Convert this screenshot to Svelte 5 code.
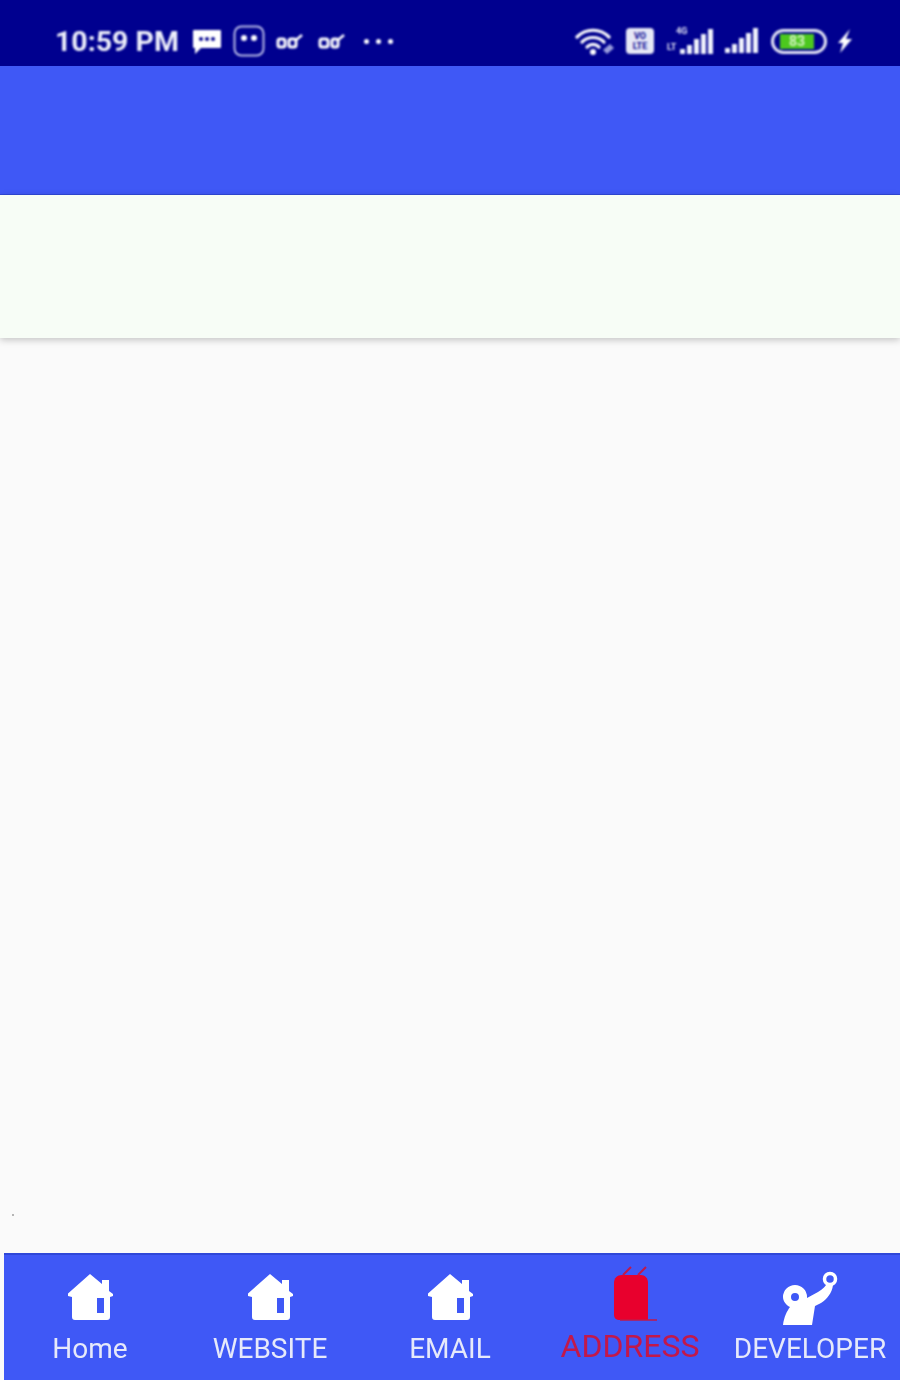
<script>
  const tabs = [
    { label: 'Home', icon: 'home' },
    { label: 'WEBSITE', icon: 'home' },
    { label: 'EMAIL', icon: 'home' },
    { label: 'ADDRESS', icon: 'addr', active: true },
    { label: 'DEVELOPER', icon: 'dev' }
  ];
</script>

<div class="screen">
  <div class="status">
    <div class="left">
      <span class="time">10:59 PM</span>
      <svg class="msg" viewBox="0 0 30 28" width="30" height="28">
        <path fill="#fff" d="M2 3h26a1 1 0 0 1 1 1v16a1 1 0 0 1-1 1H9l-6 6v-6H2a1 1 0 0 1-1-1V4a1 1 0 0 1 1-1z"/>
        <circle cx="9" cy="12" r="2" fill="#00008f"/><circle cx="15" cy="12" r="2" fill="#00008f"/><circle cx="21" cy="12" r="2" fill="#00008f"/>
      </svg>
      <svg class="bot" viewBox="0 0 32 32" width="32" height="32">
        <rect x="1.5" y="1.5" width="29" height="29" rx="7" fill="none" stroke="#b9bce8" stroke-width="2"/>
        <circle cx="11" cy="13" r="3" fill="#fff"/><circle cx="21" cy="13" r="3" fill="#fff"/>
      </svg>
      <svg class="vo first" viewBox="0 0 28 18" width="28" height="18">
        <g fill="none" stroke="#fff" stroke-width="3"><rect x="2" y="7" width="7" height="8" rx="2"/><rect x="13" y="7" width="7" height="8" rx="2"/></g>
        <path d="M20 8l6-5" stroke="#fff" stroke-width="2.500" fill="none"/>
      </svg>
      <svg class="vo second" viewBox="0 0 28 18" width="28" height="18">
        <g fill="none" stroke="#fff" stroke-width="3"><rect x="2" y="7" width="8" height="8" rx="2"/><rect x="14" y="7" width="6" height="8" rx="2"/></g>
        <path d="M20 8l6-5" stroke="#fff" stroke-width="2.500" fill="none"/>
      </svg>
      <span class="dots"><i></i><i></i><i></i></span>
    </div>
    <div class="right">
      <svg class="wifi" viewBox="0 0 40 28" width="40" height="28">
        <g fill="none" stroke="#fff" stroke-width="3.200" stroke-linecap="round">
          <path d="M2 10C11 1 25 1 34 10"/><path d="M7 15c6-6 16-6 22 0"/><path d="M12 20c3.500-3.500 8.500-3.500 12 0"/>
        </g>
        <circle cx="18" cy="25" r="3" fill="#fff"/>
        <path d="M28 23l7-6 4 4-7 6z" fill="#9a9edc"/>
      </svg>
      <span class="volte"><span>VO</span><span>LTE</span></span>
      <svg class="sig4g" viewBox="0 0 50 28" width="50" height="28">
        <text x="9" y="7" class="tiny">4G</text>
        <text x="0" y="23" class="tiny">LT</text>
        <g fill="#eef0fb"><rect x="13" y="22" width="5" height="5"/><rect x="20" y="18" width="5" height="9"/><rect x="27" y="12" width="5" height="15"/><rect x="34" y="7" width="5" height="20"/><rect x="41" y="2" width="5" height="25"/></g>
      </svg>
      <svg class="sig" viewBox="0 0 36 26" width="36" height="26">
        <g fill="#eef0fb"><rect x="1" y="20" width="5" height="5"/><rect x="8" y="16" width="5" height="9"/><rect x="15" y="10" width="5" height="15"/><rect x="22" y="5" width="5" height="20"/><rect x="29" y="0" width="5" height="25"/></g>
      </svg>
      <div class="battery"><div class="fill">83</div></div>
      <svg class="bolt" viewBox="0 0 16 24" width="16" height="24">
        <path fill="#fff" d="M13 0L1 14h5l-3 10 12-14H9z"/>
      </svg>
    </div>
  </div>

  <div class="appbar"></div>
  <div class="band"></div>
  <div class="content"><span class="speck"></span></div>

  <nav class="nav">
    {#each tabs as tab}
      <div class="tab" class:active={tab.active}>
        <svg class="icon" viewBox="0 0 60 60" width="60" height="60">
          {#if tab.icon === 'home'}
            <path fill="#fff" fill-rule="evenodd" d="M30 4L42 14V10h7v11l4 3v2l-3 1v20a3 3 0 0 1-3 3H15a3 3 0 0 1-3-3V27l-4-1v-2.500zM37 28v15h7V28z"/>
          {:else if tab.icon === 'addr'}
            <path fill="#e8002d" d="M22 5h19c4 0 7 3 7 8v37H20c-4 0-6-2-6-5V13c0-5 3-8 8-8z"/>
            <path d="M23 5l8-8M38 5l8-8" stroke="#c2184a" stroke-width="2" fill="none"/>
            <path d="M20 50h37" stroke="#c2184a" stroke-width="1.500"/>
          {:else}
            <path fill="#fff" fill-rule="evenodd" d="M3 27a12 12 0 0 1 24 0v1l11-6c5-3 8-6 9-9l6 2c-1 8-6 14-12 18l-6 3-3 19H3c1-8 4-14 7-18-4-2-7-6-7-10zm8 0a4 4 0 1 0 8 0 4 4 0 0 0-8 0z"/>
            <circle cx="50" cy="9" r="5.500" fill="none" stroke="#fff" stroke-width="3.500"/>
          {/if}
        </svg>
        <span class="label">{tab.label}</span>
      </div>
    {/each}
  </nav>
</div>

<style>
  :global(body) {
    margin: 0;
    background: #fafafa;
  }
  .screen {
    width: 900px;
    height: 1380px;
    display: flex;
    flex-direction: column;
    background: #fafafa;
    font-family: Roboto, "Liberation Sans", sans-serif;
    overflow: hidden;
  }
  .status {
    height: 66px;
    flex: none;
    background: #00008f;
    display: flex;
    justify-content: space-between;
    align-items: center;
    padding: 16px 47px 0 55px;
    box-sizing: border-box;
    color: #fff;
  }
  .status > div {
    filter: blur(0.8px);
  }
  .left, .right {
    display: flex;
    align-items: center;
  }
  .time {
    font-size: 28.500px;
    font-weight: 700;
    color: #eef0fb;
    width: 137px;
    white-space: nowrap;
  }
  .bot { margin-left: 11px; }
  .vo.first { margin-left: 11px; }
  .vo.second { margin-left: 14px; }
  .dots {
    display: flex;
    gap: 7px;
    margin-left: 18px;
  }
  .dots i {
    width: 5px;
    height: 5px;
    border-radius: 50%;
    background: #fff;
  }
  .volte {
    width: 28px;
    height: 26px;
    margin-left: 11px;
    background: #e6e7f6;
    border-radius: 4px;
    display: flex;
    flex-direction: column;
    align-items: center;
    justify-content: center;
    font-size: 9px;
    line-height: 10px;
    font-weight: 700;
    color: #00008f;
  }
  .tiny {
    font-size: 9px;
    font-weight: 700;
    fill: #e6e7f6;
  }
  .sig4g { margin-left: 13px; }
  .sig { margin-left: 7px; }
  .battery {
    margin-left: 11px;
    width: 56px;
    height: 25px;
    box-sizing: border-box;
    border: 3px solid #e6e7f6;
    border-radius: 13px;
    padding: 2px 10px 2px 6px;
    display: flex;
  }
  .fill {
    flex: 1;
    background: #4cc81e;
    color: #d8f5c8;
    font-size: 14px;
    font-weight: 700;
    line-height: 15px;
    text-align: center;
  }
  .bolt { margin-left: 10px; }
  .appbar {
    height: 129px;
    flex: none;
    background: #3f58f6;
    border-bottom: 1px solid #3048d8;
    box-sizing: border-box;
    box-shadow: 0 1px 2px rgba(48, 72, 216, 0.35);
    position: relative;
  }
  .band {
    height: 143px;
    flex: none;
    background: #f7fdf6;
    box-shadow: 0 2px 7px rgba(0, 0, 0, 0.22);
    position: relative;
  }
  .content {
    flex: 1;
    position: relative;
  }
  .speck {
    position: absolute;
    left: 12px;
    bottom: 37px;
    width: 2px;
    height: 2px;
    background: #b5b5b5;
  }
  .nav {
    height: 127px;
    flex: none;
    margin-left: 4px;
    background: #3f58f6;
    border-top: 2px solid #2f47d8;
    box-sizing: border-box;
    display: grid;
    grid-template-columns: 176px repeat(4, 180px);
  }
  .tab {
    display: flex;
    flex-direction: column;
    align-items: center;
    padding-top: 15px;
    color: #e6e9fa;
    filter: blur(0.7px);
  }
  .tab:first-child {
    padding-right: 4px;
  }
  .tab.active {
    color: #c2184a;
  }
  .icon {
    display: block;
    overflow: visible;
  }
  .label {
    margin-top: 4px;
    font-size: 28px;
    line-height: 30px;
    white-space: nowrap;
  }
  .tab.active .label {
    font-size: 32px;
    margin-top: 1px;
  }
</style>
